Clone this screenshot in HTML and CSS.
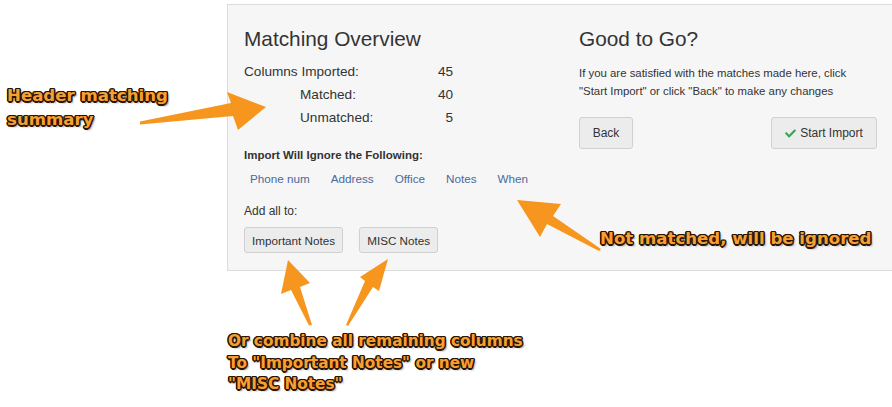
FILE: index.html
```html
<!DOCTYPE html>
<html>
<head>
<meta charset="utf-8">
<link rel="stylesheet" href="styles.css">
</head>
<body>
<div class="panel">
  <div class="col-left">
    <h2 class="title">Matching Overview</h2>
    <div class="stats">
      <span class="label">Columns Imported:</span><span class="num">45</span>
      <span class="label indent">Matched:</span><span class="num">40</span>
      <span class="label indent">Unmatched:</span><span class="num">5</span>
    </div>
    <div class="ignore-title">Import Will Ignore the Following:</div>
    <div class="links">
      <a class="link">Phone num</a>
      <a class="link">Address</a>
      <a class="link">Office</a>
      <a class="link">Notes</a>
      <a class="link">When</a>
    </div>
    <div class="addall">Add all to:</div>
    <div class="btn-row">
      <button class="btn btn-sm">Important Notes</button>
      <button class="btn btn-sm">MISC Notes</button>
    </div>
  </div>
  <div class="col-right">
    <h2 class="title">Good to Go?</h2>
    <p class="desc">If you are satisfied with the matches made here, click "Start Import" or click "Back" to make any changes</p>
    <div class="actions">
      <button class="btn btn-md btn-back">Back</button>
      <button class="btn btn-md btn-start"><svg class="check" viewBox="0 0 512 512"><path d="M173.898 439.404l-166.4-166.4c-9.997-9.997-9.997-26.206 0-36.204l36.203-36.204c9.997-9.998 26.207-9.998 36.204 0L192 312.69 432.095 72.596c9.997-9.997 26.207-9.997 36.204 0l36.203 36.204c9.997 9.997 9.997 26.206 0 36.204l-294.4 294.401c-9.998 9.997-26.207 9.997-36.204-.001z"/></svg>Start Import</button>
    </div>
  </div>
</div>

<svg class="arrows" width="892" height="407" viewBox="0 0 892 407">
  <g class="arrow">
    <polygon points="140,121.5 231,103 227,92 266,107 238,130 233,116 140,124.5"/>
    <polygon points="517,200 561,204 553,216 601,249 599,251 547,224 540,237"/>
    <polygon points="288,260 310,283 300,287 312,325 309,325.5 291,290 281,294"/>
    <polygon points="388,259 379,291 373,287 348,326 346,325 365,281 360,277"/>
  </g>
</svg>

<div class="note note-header">Header matching<br>summary</div>
<div class="note note-ignored">Not matched, will be ignored</div>
<div class="note note-combine">Or combine all remaining columns<br>To "Important Notes" or new<br>"MISC Notes"</div>
</body>
</html>
```

FILE: styles.css
```css
html, body {
  margin: 0;
  padding: 0;
}
body {
  width: 892px;
  height: 407px;
  position: relative;
  overflow: hidden;
  background: #ffffff;
  font-family: "Liberation Sans", Arial, sans-serif;
  color: #333333;
}
.panel {
  margin: 4px 0 0 227px;
  height: 265px;
  border: 1px solid #dcdcdc;
  border-right: none;
  background: #f6f6f6;
  display: flex;
}
.col-left {
  width: 335px;
  padding-left: 16px;
  display: flex;
  flex-direction: column;
}
.col-right {
  width: 298px;
  display: flex;
  flex-direction: column;
}
.title {
  margin: 23px 0 0 0;
  font-size: 20.8px;
  line-height: 22px;
  font-weight: normal;
  color: #333;
}
.stats {
  margin-top: 10px;
  display: grid;
  grid-template-columns: 190px 19px;
  grid-auto-rows: 23px;
  font-size: 13.6px;
  line-height: 23px;
  color: #333;
}
.label.indent {
  padding-left: 56px;
}
.num {
  text-align: right;
}
.ignore-title {
  margin-top: 18px;
  font-size: 11.5px;
  font-weight: bold;
  line-height: 16px;
  color: #333;
}
.links {
  margin-top: 8px;
  padding-left: 6px;
  display: flex;
  gap: 21px;
  font-size: 11.7px;
  line-height: 16px;
}
.link {
  color: #4a6a9c;
  text-decoration: none;
}
.addall {
  margin-top: 16px;
  font-size: 12px;
  line-height: 16px;
  color: #333;
}
.btn-row {
  margin-top: 8px;
  display: flex;
  gap: 16px;
}
.btn {
  font-family: "Liberation Sans", Arial, sans-serif;
  color: #333;
  background: #ececec;
  border: 1px solid #d0d0d0;
  border-radius: 3px;
  margin: 0;
  display: flex;
  align-items: center;
  justify-content: center;
}
.btn-sm {
  height: 26px;
  font-size: 11.7px;
  padding: 0 7px;
}
.desc {
  margin: 14px 0 0 0;
  font-size: 11.4px;
  line-height: 18px;
  color: #333;
}
.actions {
  margin-top: 17px;
  display: flex;
  justify-content: space-between;
}
.btn-md {
  height: 32px;
  font-size: 12px;
}
.btn-back {
  width: 54px;
  padding: 0;
}
.btn-start {
  width: 106px;
  padding: 0;
  gap: 4px;
}
.check {
  width: 11px;
  height: 11px;
  fill: #3aa655;
}
.arrows {
  position: absolute;
  left: 0;
  top: 0;
  pointer-events: none;
}
.arrow {
  fill: #f7961f;
}
.note {
  position: absolute;
  font-family: "DejaVu Sans", "Liberation Sans", sans-serif;
  font-weight: bold;
  color: #f6a034;
  white-space: nowrap;
  text-shadow:
    1px 0 0 #2b1400, -1px 0 0 #2b1400, 0 1px 0 #2b1400, 0 -1px 0 #2b1400,
    1.5px 0 0 #2b1400, -1.5px 0 0 #2b1400, 0 1.5px 0 #2b1400, 0 -1.5px 0 #2b1400,
    1px 1px 0 #2b1400, -1px -1px 0 #2b1400, 1px -1px 0 #2b1400, -1px 1px 0 #2b1400,
    2px 2px 2px rgba(0, 0, 0, 0.45);
}
.note-header {
  left: 7px;
  top: 84px;
  font-size: 16.6px;
  line-height: 24px;
}
.note-ignored {
  left: 600px;
  top: 229px;
  font-size: 16.6px;
  line-height: 20px;
}
.note-combine {
  left: 228px;
  top: 331px;
  font-size: 15.3px;
  line-height: 21.5px;
}
```
